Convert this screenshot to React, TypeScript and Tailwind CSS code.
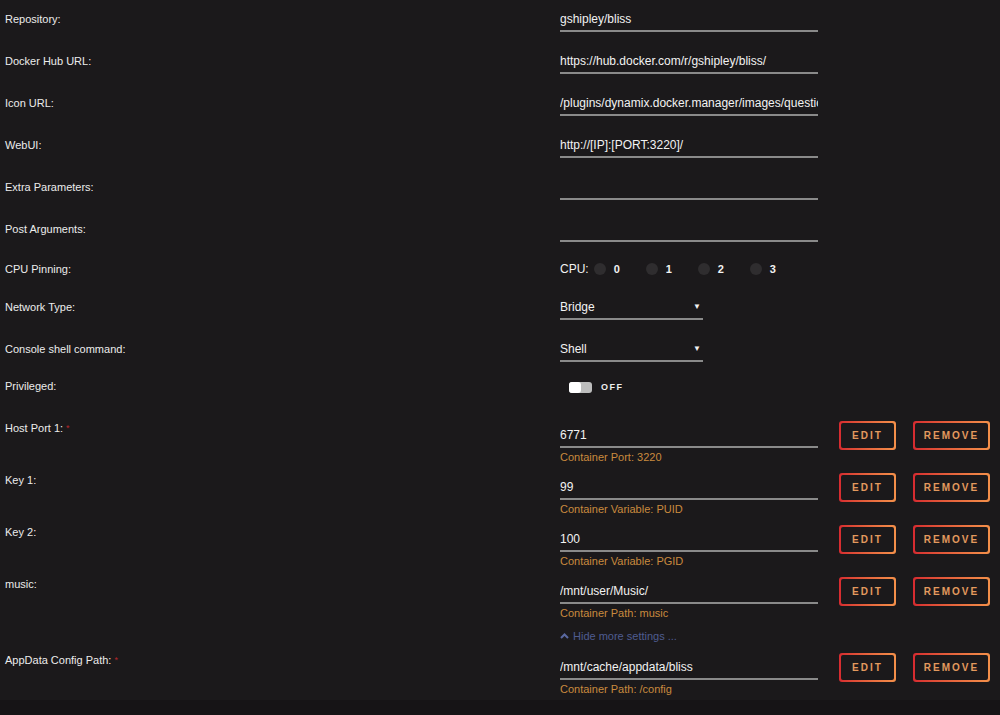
import React from 'react';

const font = { fontFamily: '"Liberation Sans", Arial, sans-serif' };

const Label = ({ text, req, pt }: { text: string; req?: boolean; pt: string }) => (
    <div className={`w-[560px] shrink-0 pl-[5px] text-[11px] leading-4 text-[#ececec] ${pt}`}>
        {text}
        {req && <span className="ml-[3px] align-top text-[9px] text-[#b3262b]">*</span>}
    </div>
);

const Field = ({ value }: { value: string }) => (
    <div className="w-[258px] overflow-hidden whitespace-nowrap border-b-2 border-[#8a8a8a] pb-[3px] text-[12px] leading-4 text-[#f2f2f2]">
        {value || '\u00a0'}
    </div>
);

const SimpleRow = ({ label, value }: { label: string; value: string }) => (
    <div className="flex h-[42px]">
        <Label text={label} pt="pt-[11px]" />
        <div className="pt-[11px]">
            <Field value={value} />
        </div>
    </div>
);

const GradButton = ({ label, w }: { label: string; w: string }) => (
    <div className={`rounded-[3px] bg-linear-to-r from-[#d62a30] to-[#f4904a] p-[2px] ${w}`}>
        <div className="flex h-[25px] items-center justify-center rounded-[2px] bg-[#1b191b] text-[10px] font-bold tracking-[2px] text-[#e39a5e]">
            {label}
        </div>
    </div>
);

const MappedRow = ({ label, value, hint, req, h = 'h-[52px]', children }: {
    label: string; value: string; hint: string; req?: boolean; h?: string; children?: React.ReactNode;
}) => (
    <div className={`flex ${h}`}>
        <Label text={label} req={req} pt="pt-2" />
        <div className="pt-[15px]">
            <Field value={value} />
            <div className="mt-[2px] text-[11px] leading-[14px] text-[#c98a3e]">{hint}</div>
            {children}
        </div>
        <div className="ml-[21px] flex gap-[17px] pt-[9px]">
            <GradButton label="EDIT" w="w-[57px] h-[29px]" />
            <GradButton label="REMOVE" w="w-[77px] h-[29px]" />
        </div>
    </div>
);

const Select = ({ value }: { value: string }) => (
    <div className="flex w-[143px] items-center justify-between border-b-2 border-[#8a8a8a] pb-[3px] text-[12px] leading-4 text-[#f2f2f2]">
        <span>{value}</span>
        <span className="pr-[2px] text-[8px]">▼</span>
    </div>
);

export default function App() {
    return (
        <div className="flex h-[715px] w-[1000px] flex-col overflow-hidden bg-[#1b191b]" style={font}>
            <SimpleRow label="Repository:" value="gshipley/bliss" />
            <SimpleRow label="Docker Hub URL:" value="https://hub.docker.com/r/gshipley/bliss/" />
            <SimpleRow label="Icon URL:" value="/plugins/dynamix.docker.manager/images/question.png" />
            <SimpleRow label="WebUI:" value="http://[IP]:[PORT:3220]/" />
            <SimpleRow label="Extra Parameters:" value="" />
            <SimpleRow label="Post Arguments:" value="" />

            <div className="flex h-[38px]">
                <Label text="CPU Pinning:" pt="pt-[9px]" />
                <div className="flex h-fit items-center pt-[9px] text-[12px] leading-4 text-[#f2f2f2]">
                    <span className="mr-[5px]">CPU:</span>
                    {['0', '1', '2', '3'].map((c) => (
                        <div key={c} className="flex w-[52px] items-center">
                            <span className="h-[12px] w-[12px] rounded-full bg-[#2f2d2f]" />
                            <span className="ml-[8px] text-[11px] font-bold">{c}</span>
                        </div>
                    ))}
                </div>
            </div>

            <div className="flex h-[42px]">
                <Label text="Network Type:" pt="pt-[9px]" />
                <div className="pt-[9px]">
                    <Select value="Bridge" />
                </div>
            </div>

            <div className="flex h-[38px]">
                <Label text="Console shell command:" pt="pt-[9px]" />
                <div className="pt-[9px]">
                    <Select value="Shell" />
                </div>
            </div>

            <div className="flex h-[42px]">
                <Label text="Privileged:" pt="pt-2" />
                <div className="flex h-fit items-center pl-[9px] pt-[11px]">
                    <div className="flex h-[11px] w-[23px] items-center rounded-[3px] bg-[#bdbdbd]">
                        <span className="h-[11px] w-[12px] rounded-[3px] bg-white" />
                    </div>
                    <span className="ml-[9px] text-[9px] font-bold tracking-[1.5px] text-[#eeeeee]">OFF</span>
                </div>
            </div>

            <MappedRow label="Host Port 1:" req value="6771" hint="Container Port: 3220" />
            <MappedRow label="Key 1:" value="99" hint="Container Variable: PUID" />
            <MappedRow label="Key 2:" value="100" hint="Container Variable: PGID" />
            <MappedRow label="music:" value="/mnt/user/Music/" hint="Container Path: music" h="h-[76px]">
                <div className="mt-[9px] flex items-center gap-[4px] text-[11px] leading-[14px] text-[#4f5c90]">
                    <svg width="9" height="6" viewBox="0 0 9 6">
                        <path d="M1 5 L4.5 1.5 L8 5" stroke="#5a68a0" strokeWidth="2" fill="none" />
                    </svg>
                    Hide more settings ...
                </div>
            </MappedRow>
            <MappedRow label="AppData Config Path:" req value="/mnt/cache/appdata/bliss" hint="Container Path: /config" />

            <div className="mt-auto h-[15px] bg-[#161416]" />
        </div>
    );
}
